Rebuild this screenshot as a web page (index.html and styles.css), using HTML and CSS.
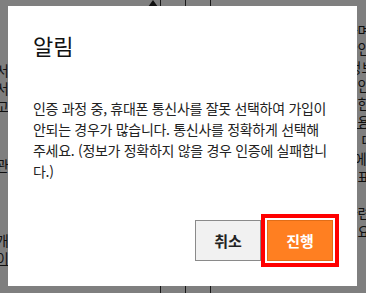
FILE: index.html
```html
<!DOCTYPE html>
<html lang="ko">
<head>
<meta charset="utf-8">
<title>알림</title>
<link rel="stylesheet" href="styles.css">
</head>
<body>
<div class="page">
  <div class="col-left">
    <div class="gap g1"></div>
    <p class="ln">서비스를 이용하기 위해서는 합</p>
    <p class="ln">서비스 0 이용 약관에 동의</p>
    <p class="ln">고객은 등으로 가입하여</p>
    <div class="gap g2"></div>
    <p class="ln">관련 법령에 근거하여</p>
    <div class="gap g3"></div>
    <p class="ln">개인정보 처리 정책에</p>
    <p class="ln"><u>이용약관 으로 이동</u></p>
  </div>
  <div class="col-mid">
    <div class="cell"><span class="tri"></span></div>
    <div class="cell"></div>
  </div>
  <div class="col-right">
    <p class="top">최상단으로</p>
    <p class="ln">회원 가입 절차를 안내하며 본인 인증을 진행하</p>
    <p class="ln">이용자는 휴대폰 본인 확인을 통해 인증을 받으</p>
    <p class="ln">통신사 선택 후 입력한 정보는 본인 확인 목적글</p>
    <p class="ln">인증 결과는 암호화되어 안전하게 저장되며 토</p>
    <p class="ln">서비스 이용에 관한 자세한 사항은 고객센터리</p>
    <p class="ln"><u>개인정보 처리방침 및 이용약관에 관한 내용부</u></p>
    <p class="ln">본 서비스는 관계 법령에 따라 만 14세 이상상</p>
    <p class="ln">가입 후에는 마이페이지에서 회원 정보를 수호</p>
    <p class="ln">문의 사항은 고객센터 대표번호로 연락 주시0</p>
    <p class="ln">&nbsp;</p>
    <p class="ln">개인정보 보호 정책은 관련 법령의 변경에 ,</p>
    <p class="ln">회원은 언제든지 탈퇴를 요청할 수 있으며 E의</p>
    <p class="ln">&nbsp;</p>
    <p class="ln">할 수 있다</p>
  </div>
</div>

<div class="overlay">
  <div class="modal" role="dialog" aria-labelledby="dlg-title">
    <h2 class="modal-title" id="dlg-title">알림</h2>
    <p class="modal-body">인증 과정 중, 휴대폰 통신사를 잘못 선택하여 가입이<br>안되는 경우가 많습니다. 통신사를 정확하게 선택해<br>주세요. (정보가 정확하지 않을 경우 인증에 실패합니<br>다.)</p>
    <div class="modal-actions">
      <button class="btn btn-cancel" type="button">취소</button>
      <button class="btn btn-go" type="button">진행</button>
    </div>
  </div>
</div>
</body>
</html>
```

FILE: styles.css
```css
html, body {
  margin: 0;
  padding: 0;
}
body {
  width: 366px;
  height: 293px;
  overflow: hidden;
  background: #ffffff;
  font-family: "Noto Sans CJK KR", "Noto Sans", sans-serif;
  color: #1e1e1e;
}

/* background page */
.page {
  display: flex;
  height: 293px;
  overflow: hidden;
}
.col-left {
  width: 164px;
  flex: none;
  font-size: 14px;
  line-height: 18px;
  margin-left: -4px;
  overflow: hidden;
}
.col-left .ln {
  margin: 0;
  white-space: nowrap;
  overflow: hidden;
}
.g1 { height: 61px; }
.g2 { height: 41px; }
.g3 { height: 57px; }

.col-mid {
  display: flex;
  flex: none;
}
.col-mid .cell {
  width: 24px;
  border-left: 1px solid #333;
}
.tri {
  display: block;
  width: 0;
  height: 0;
  margin: 0 0 0 -13px;
  border-left: 5px solid transparent;
  border-right: 5px solid transparent;
  border-bottom: 7px solid #222;
}
.col-right {
  flex: 1;
  min-width: 0;
  padding-left: 6px;
  font-size: 14px;
  line-height: 18.3px;
  border-left: 1px solid #333;
  overflow: hidden;
}
.col-right .top {
  margin: 0 0 3px;
  height: 18px;
  font-size: 13px;
  line-height: 26px;
}
.col-right .ln {
  margin: 0;
  white-space: nowrap;
}

/* overlay & dialog */
.overlay {
  position: fixed;
  inset: 0;
  background: rgba(0, 0, 0, 0.5);
}
.modal {
  position: absolute;
  left: 8px;
  top: 6px;
  width: 349px;
  height: 280px;
  box-sizing: border-box;
  background: #ffffff;
  padding: 24px 24px 25px 25px;
  display: flex;
  flex-direction: column;
}
.modal-title {
  margin: 0;
  font-size: 22px;
  font-weight: 400;
  line-height: 30px;
  color: #111111;
}
.modal-body {
  margin: 38px 0 0;
  font-size: 14px;
  line-height: 21px;
  letter-spacing: -0.3px;
  color: #222222;
  white-space: nowrap;
}
.modal-actions {
  margin-top: auto;
  display: flex;
  justify-content: flex-end;
  gap: 6px;
}
.btn {
  width: 66px;
  height: 41px;
  box-sizing: border-box;
  font-family: "Noto Sans CJK KR", "Noto Sans", sans-serif;
  font-size: 15px;
  font-weight: 700;
  padding: 0;
  cursor: pointer;
}
.btn-cancel {
  background: #f1f1f1;
  border: 1px solid #8a8a8a;
  color: #222222;
}
.btn-go {
  background: #ff7f21;
  border: 1px solid #e06d18;
  color: #ffffff;
  outline: 4px solid #ff0000;
  outline-offset: 2px;
}
```
